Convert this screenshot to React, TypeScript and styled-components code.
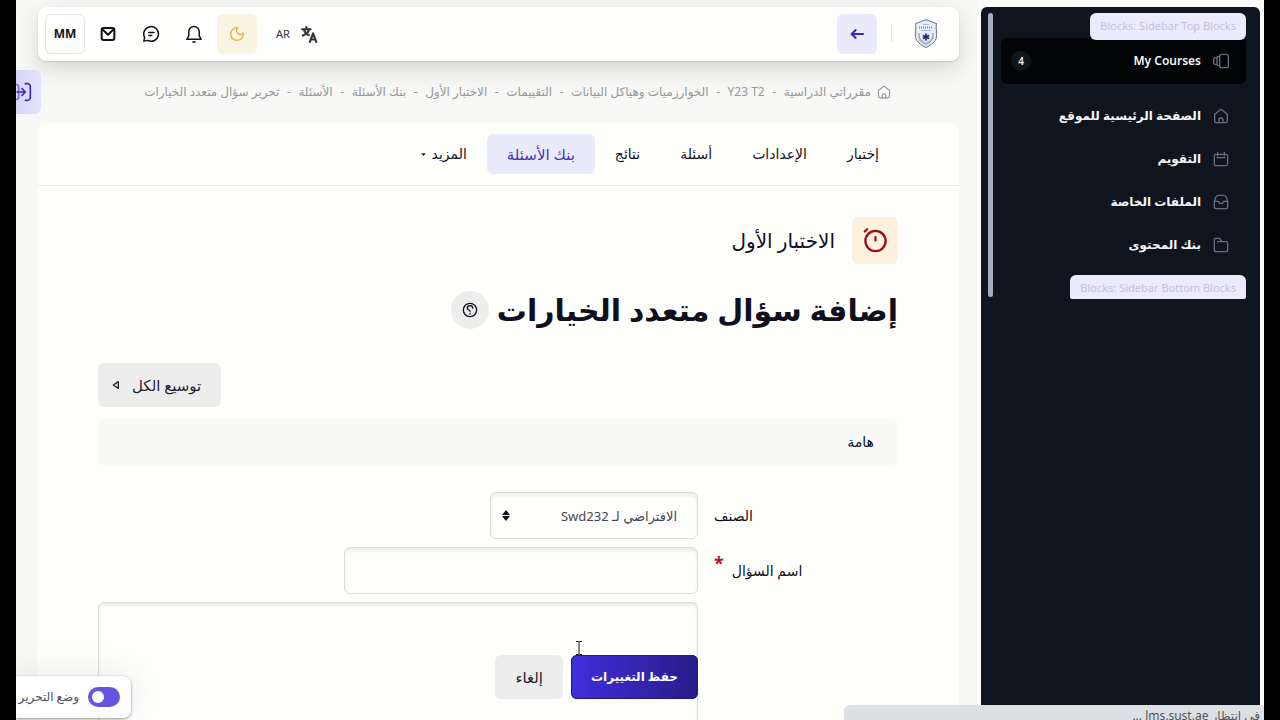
import React from "react";
import styled, { createGlobalStyle } from "styled-components";

const GlobalStyle = createGlobalStyle`
  *, *::before, *::after { box-sizing: border-box; }
  html, body { margin: 0; background: #000; }
  body {
    font-family: "Noto Sans", "DejaVu Sans", sans-serif;
    font-size: 14px;
    line-height: 20px;
    color: #0f0f1e;
  }
  button, input, select, textarea { font: inherit; color: inherit; margin: 0; }
  button { cursor: pointer; border: 0; background: none; padding: 0; }
  a { color: inherit; text-decoration: none; }
  h1, h2, p, ul, ol { margin: 0; padding: 0; }
  ul, ol { list-style: none; }
`;

const Page = styled.div`
  position: relative;
  display: flex;
  height: 100vh;
  margin: 0 16px;
  overflow: hidden;
  background: #f8f8f6;
`;

const Sidebar = styled.aside`
  flex: none;
  display: flex;
  width: 287px;
  padding: 7px 4px 14px;
  background: #fbfcfa;
`;

const SidebarPanel = styled.div`
  flex: 1;
  padding: 6px 14px 0 20px;
  background: #0f151e;
  border-radius: 6px 6px 0 0;
  position: relative;
`;

const ScrollThumb = styled.div`
  position: absolute;
  top: 6px;
  left: 7px;
  width: 5px;
  height: 284px;
  border-radius: 3px;
  background: #a9acb9;
`;

const BlockTag = styled.div<{ $bottom?: boolean }>`
  position: relative;
  z-index: 1;
  width: fit-content;
  height: ${(p) => (p.$bottom ? 24 : 27)}px;
  padding: 0 10px;
  border-radius: ${(p) => (p.$bottom ? "6px 6px 2px 2px" : "6px")};
  background: #ebebfb;
  color: #c5bfe8;
  font-size: 11px;
  line-height: 26px;
  direction: ltr;
`;

const Nav = styled.nav`
  margin: -2px 0 9px;
`;

const NavLink = styled.a<{ $active?: boolean }>`
  display: flex;
  align-items: center;
  gap: 12px;
  height: ${(p) => (p.$active ? 46 : 43)}px;
  margin-bottom: ${(p) => (p.$active ? 10 : 0)}px;
  padding: 0 17px 0 10px;
  border-radius: 6px;
  background: ${(p) => (p.$active ? "#030406" : "transparent")};
  color: #f4f6f4;
  font-weight: 600;
  font-size: 12px;

  svg { color: #696b80; flex: none; }
`;

const Count = styled.span`
  margin-right: auto;
  width: 20px;
  height: 20px;
  border-radius: 50%;
  background: #10151d;
  font-size: 10px;
  text-align: center;
`;

const Main = styled.main`
  flex: 1;
  min-width: 0;
  display: flex;
  flex-direction: column;
  padding: 7px 18px 0 22px;
`;

const TopBar = styled.header`
  flex: none;
  display: flex;
  align-items: center;
  justify-content: space-between;
  height: 54px;
  padding: 0 21px 0 7px;
  border-radius: 8px;
  background: #fefefc;
  box-shadow: 0 1px 2px rgba(0, 0, 0, 0.14), 0 8px 24px rgba(0, 0, 0, 0.14);
`;

const BarGroup = styled.div`
  display: flex;
  align-items: center;
  gap: 3px;
`;

const Divider = styled.span`
  width: 1px;
  height: 16px;
  margin: 0 19px 0 11px;
  background: #e3e4e3;
`;

const IconButton = styled.button<{ $tone?: "violet" | "amber" | "outline" }>`
  display: flex;
  align-items: center;
  justify-content: center;
  width: 40px;
  height: 40px;
  border-radius: 6px;
  font-size: 12px;
  font-weight: 700;
  border: ${(p) => (p.$tone === "outline" ? "1px solid #e4e5e6" : "0")};
  background: ${(p) => (p.$tone === "violet" ? "#eaeafb" : p.$tone === "amber" ? "#fdf3e3" : "transparent")};
  color: ${(p) => (p.$tone === "violet" ? "#3f20c2" : p.$tone === "amber" ? "#e3ae38" : "#101018")};
`;

const LanguageButton = styled.button`
  display: flex;
  align-items: center;
  gap: 11px;
  margin-left: 16px;
  font-size: 11px;
  color: #33343c;
`;

const Crumbs = styled.ol`
  display: flex;
  align-items: center;
  flex: none;
  height: 62px;
  padding: 0 68px 0 0;
  font-size: 12px;
  color: #95969c;
  white-space: nowrap;

  li { display: flex; align-items: center; }
  li + li::before { content: "-"; width: 19px; text-align: center; }
  a { display: flex; align-items: center; gap: 6px; }
`;

const Card = styled.section`
  flex: 1;
  min-height: 0;
  border-radius: 6px 6px 0 0;
  background: #fefefb;
`;

const Tabs = styled.nav`
  display: flex;
  height: 63px;
  padding: 11px 60px;
  border-bottom: 1px solid #ecedeb;
`;

const Tab = styled.a<{ $active?: boolean }>`
  display: flex;
  align-items: center;
  gap: 6px;
  height: 40px;
  padding: 0 20px;
  border-radius: 6px;
  background: ${(p) => (p.$active ? "#e9eafa" : "transparent")};
  color: ${(p) => (p.$active ? "#4a35ae" : "#14141f")};
  font-size: ${(p) => (p.$active ? 15 : 14)}px;
  white-space: nowrap;
`;

const Content = styled.div`
  display: flex;
  flex-direction: column;
  padding: 31px 61px 0 60px;
`;

const Activity = styled.div`
  display: flex;
  align-items: center;
  gap: 17px;
  font-size: 20px;
  line-height: 28px;
`;

const ActivityIcon = styled.span`
  display: flex;
  align-items: center;
  justify-content: center;
  width: 46px;
  height: 47px;
  border-radius: 6px;
  background: #fcf0df;
  color: #a00912;
`;

const Heading = styled.div`
  display: flex;
  align-items: center;
  gap: 8px;
  height: 40px;
  margin: 26px 0 33px;

  h1 { font-size: 30px; line-height: 40px; font-weight: 700; white-space: nowrap; }
`;

const HelpButton = styled.button`
  display: flex;
  align-items: center;
  justify-content: center;
  width: 38px;
  height: 38px;
  border-radius: 50%;
  background: #ededed;
`;

const Button = styled.button<{ $primary?: boolean; $withIcon?: boolean }>`
  display: flex;
  align-items: center;
  justify-content: center;
  gap: 12px;
  height: 44px;
  padding: ${(p) => (p.$withIcon ? "0 20px 0 14px" : "0 20px")};
  border-radius: 6px;
  background: ${(p) => (p.$primary ? "linear-gradient(90deg, #3f2fdd, #281c88)" : "#ededed")};
  box-shadow: ${(p) => (p.$primary ? "inset 0 0 0 1px #241878" : "none")};
  color: ${(p) => (p.$primary ? "#fff" : "#23232e")};
  font-size: ${(p) => (p.$primary ? 12 : 15)}px;
  font-weight: ${(p) => (p.$primary ? 700 : 400)};
  white-space: nowrap;
`;

const ExpandRow = styled.div`
  display: flex;
  justify-content: flex-end;
  margin-bottom: 12px;
`;

const SectionTitle = styled.h2`
  height: 46px;
  margin-bottom: 27px;
  padding: 0 24px;
  border-radius: 6px;
  background: #f9f9f7;
  font-size: 14px;
  font-weight: 500;
  line-height: 46px;
`;

const FormRow = styled.div`
  display: grid;
  grid-template-columns: 1fr 3fr;
  margin-bottom: 8px;
`;

const Label = styled.label`
  display: flex;
  align-items: center;
  justify-content: flex-end;
  gap: 8px;
  padding-left: 16px;
`;

const Required = styled.span`
  height: 36px;
  color: #b8132f;
  font-size: 18px;
  font-weight: 700;
`;

const fieldBox = `
  border: 1px solid #dcdddb;
  border-radius: 6px;
  background: #fefefc;
  box-shadow: inset 0 3px 3px rgba(0, 0, 0, 0.07);
  outline: 0;
`;

const SelectWrap = styled.div`
  position: relative;
  width: 208px;
`;

const Select = styled.select`
  ${fieldBox}
  appearance: none;
  display: block;
  width: 100%;
  height: 47px;
  padding: 0 20px;
  color: #454653;
  font-size: 13px;
`;

const SelectArrows = styled.svg`
  position: absolute;
  left: 12px;
  top: 18px;
  pointer-events: none;
`;

const TextInput = styled.input`
  ${fieldBox}
  width: 354px;
  height: 47px;
  padding: 0 20px;
`;

const EditorWrap = styled.div`
  position: relative;
`;

const Editor = styled.textarea`
  ${fieldBox}
  display: block;
  width: 100%;
  height: 200px;
  padding: 20px;
  resize: none;
`;

const Actions = styled.div`
  position: absolute;
  top: 53px;
  right: 0;
  display: flex;
  gap: 8px;
`;

const Pointer = styled.svg`
  position: absolute;
  top: 39px;
  right: 115px;
`;

const DrawerToggle = styled.button`
  position: absolute;
  top: 70px;
  left: 0;
  display: flex;
  align-items: center;
  width: 25px;
  height: 44px;
  border-radius: 0 6px 6px 0;
  background: linear-gradient(90deg, #d7d5f7, #e3e2fb);
  color: #4425b5;
  direction: ltr;
  overflow: hidden;

  svg { flex: none; margin-left: -4px; }
`;

const EditMode = styled.label`
  position: absolute;
  left: 0;
  bottom: 2px;
  display: flex;
  align-items: center;
  gap: 9px;
  width: 115px;
  height: 42px;
  padding-right: 11px;
  border-radius: 0 8px 8px 0;
  background: #fefefe;
  box-shadow: 0 1px 3px rgba(0, 0, 0, 0.4), 0 -4px 32px rgba(0, 0, 0, 0.08);
  color: #50515b;
  font-size: 12px;
  white-space: nowrap;
`;

const Switch = styled.input`
  appearance: none;
  flex: none;
  display: flex;
  align-items: center;
  justify-content: flex-end;
  width: 32px;
  height: 20px;
  padding: 0 4px;
  border-radius: 10px;
  background: #6656df;

  &::before {
    content: "";
    width: 12px;
    height: 12px;
    border-radius: 50%;
    background: #fff;
  }
`;

const StatusBar = styled.div`
  position: absolute;
  right: 0;
  bottom: 0;
  width: 420px;
  height: 15px;
  padding: 1px 4px 0;
  overflow: hidden;
  border-radius: 6px 0 0 0;
  background: #dde0e3;
  color: #53565b;
  font-size: 12px;
  white-space: nowrap;
`;

type IconName =
  | "courses" | "home" | "calendar" | "files" | "folder" | "mail" | "chat"
  | "bell" | "moon" | "translate" | "back" | "drawer" | "timer" | "help" | "caret" | "expand";

const shapes: Record<IconName, React.ReactNode> = {
  courses: <><rect x="10" y="2" width="13" height="20" rx="3" /><path d="M10 5H8a2 2 0 0 0-2 2v10a2 2 0 0 0 2 2h2M5 7H3a2 2 0 0 0-2 2v6a2 2 0 0 0 2 2h2" /></>,
  home: <><path d="M2.500 9.500 12 2l9.500 7.500V19a3 3 0 0 1-3 3h-13a3 3 0 0 1-3-3z" /><path d="M9 22v-4a3 3 0 0 1 6 0v4" /></>,
  calendar: <><rect x="2" y="5" width="20" height="17" rx="2" /><path d="M7 2v5M17 2v5M6 10h12" /></>,
  files: <><path d="M2 11l2-6a4 4 0 0 1 4-3h8a4 4 0 0 1 4 3l2 6v8a3 3 0 0 1-3 3H5a3 3 0 0 1-3-3z" /><path d="M2 11h6l2 3h4l2-3h6" /></>,
  folder: <path d="M2 19V4a2 2 0 0 1 2-2h6l3 5h7a2 2 0 0 1 2 2v10a3 3 0 0 1-3 3H5a3 3 0 0 1-3-3zM7 7h6" />,
  mail: <><rect x="2.500" y="3" width="19" height="18" rx="3" /><path d="m3.500 5 8.500 8 8.500-8" /></>,
  chat: <><path d="M2.500 21.500l1-5a9.800 9.800 0 1 1 4 4z" /><path d="M9 10h7M9 14h4" /></>,
  bell: <><path d="M2.500 19h19l-2.500-4.500V9A7 7 0 0 0 5 9v5.500z" /><path d="M10.500 22.500h3" /></>,
  moon: <path d="M13 2.500a5.800 5.800 0 0 0 8.500 8.500A9.500 9.500 0 1 1 13 2.500z" />,
  translate: <><path d="M1.500 4.500h12M7.500 1.500v3M4 4.500c1 4 4 7 7 8.500M11.500 4.500c-1 4-5 7.500-9 9" /><path d="m12.500 22.500 4.500-12 4.500 12M14 19h6" /></>,
  back: <path d="M21 12H4M10 6l-6 6 6 6" />,
  drawer: <><path d="M1 3h4a3 3 0 0 1 3 3v12a3 3 0 0 1-3 3H1" opacity=".6" /><path d="M6 12h10M12 8l4 4-4 4M16 2h2.500a3.500 3.500 0 0 1 3.500 3.500v13a3.500 3.500 0 0 1-3.500 3.500H16" /></>,
  timer: <><circle cx="12" cy="12.500" r="9" /><path d="M12 9v3M2.500 4l2-2" /></>,
  help: <><circle cx="12" cy="12" r="10" /><path d="M16 9.500a4 4 0 0 0-8 0c0 3 4 2 4 4.500M12 17v1" strokeWidth="2" /></>,
  caret: <path d="M1 6h22L12 19z" fill="currentColor" stroke="none" />,
  expand: <path d="M19 2v20L4 12z" />,
};

const Icon = ({ name, size = 16, weight = 2 }: { name: IconName; size?: number; weight?: number }) => (
  <svg width={size} height={size} viewBox="0 0 24 24" fill="none" stroke="currentColor" strokeWidth={weight} strokeLinecap="round" strokeLinejoin="round" aria-hidden="true">
    {shapes[name]}
  </svg>
);

const Crest = () => (
  <svg width="24" height="30" viewBox="0 0 24 30" fill="none" role="img" aria-label="SUST">
    <path d="M12 1C15 1 17 3 22.500 4.500c-1 4 .5 9 0 13C22 23 17.500 25.500 12 28.500 6.500 25.500 2 23 1.500 17.500c-.5-4 1-9 0-13C7 3 9 1 12 1z" fill="#e6edf8" stroke="#60708f" />
    <path d="M5 8.500h14" stroke="#8190b4" strokeWidth="2" strokeDasharray="1 1" />
    <path d="M9 5.500h6M7 11.500h10" stroke="#b3bfd8" />
    <path d="M5 14c-1 6 2 9 7 11 5-2 8-5 7-11" stroke="#a9a9ae" strokeWidth="1.500" />
    <circle cx="12" cy="18" r="4" fill="#cfd1ef" />
    <path d="M12 14.500v7M9 16.500l6 3M15 16.500l-6 3" stroke="#25206f" strokeWidth="1.500" />
  </svg>
);

const navItems: { icon: IconName; label: string }[] = [
  { icon: "home", label: "الصفحة الرئيسية للموقع" },
  { icon: "calendar", label: "التقويم" },
  { icon: "files", label: "الملفات الخاصة" },
  { icon: "folder", label: "بنك المحتوى" },
];

const crumbs = [
  "مقرراتي الدراسية", "Y23 T2", "الخوارزميات وهياكل البيانات", "التقييمات",
  "الاختبار الأول", "بنك الأسئلة", "الأسئلة", "تحرير سؤال متعدد الخيارات",
];

const tabs = ["إختبار", "الإعدادات", "أسئلة", "نتائج", "بنك الأسئلة", "المزيد"];

export default function App() {
  return (
    <>
      <GlobalStyle />
      <Page dir="rtl" lang="ar">
        <Sidebar>
          <SidebarPanel>
            <ScrollThumb />
            <BlockTag>Blocks: Sidebar Top Blocks</BlockTag>
            <Nav>
              <NavLink href="#" $active>
                <Icon name="courses" />
                My Courses
                <Count>4</Count>
              </NavLink>
              {navItems.map((item) => (
                <NavLink href="#" key={item.label}>
                  <Icon name={item.icon} />
                  {item.label}
                </NavLink>
              ))}
            </Nav>
            <BlockTag $bottom>Blocks: Sidebar Bottom Blocks</BlockTag>
          </SidebarPanel>
        </Sidebar>

        <Main>
          <TopBar>
            <BarGroup>
              <Crest />
              <Divider />
              <IconButton $tone="violet" aria-label="رجوع"><Icon name="back" weight={3} /></IconButton>
            </BarGroup>
            <BarGroup>
              <LanguageButton>
                <Icon name="translate" size={17} weight={3} />
                AR
              </LanguageButton>
              <IconButton $tone="amber" aria-label="الوضع الليلي"><Icon name="moon" /></IconButton>
              <IconButton aria-label="الإشعارات"><Icon name="bell" size={18} /></IconButton>
              <IconButton aria-label="الرسائل"><Icon name="chat" size={18} /></IconButton>
              <IconButton aria-label="البريد"><Icon name="mail" weight={3} /></IconButton>
              <IconButton $tone="outline">MM</IconButton>
            </BarGroup>
          </TopBar>

          <Crumbs>
            {crumbs.map((crumb, i) => (
              <li key={crumb}>
                <a href="#">{i === 0 && <Icon name="home" size={14} />}{crumb}</a>
              </li>
            ))}
          </Crumbs>

          <Card>
            <Tabs>
              {tabs.map((tab) => (
                <Tab href="#" key={tab} $active={tab === "بنك الأسئلة"}>
                  {tab}
                  {tab === "المزيد" && <Icon name="caret" size={5} />}
                </Tab>
              ))}
            </Tabs>
            <Content>
              <Activity>
                <ActivityIcon><Icon name="timer" size={27} /></ActivityIcon>
                الاختبار الأول
              </Activity>
              <Heading>
                <h1>إضافة سؤال متعدد الخيارات</h1>
                <HelpButton aria-label="مساعدة"><Icon name="help" /></HelpButton>
              </Heading>
              <ExpandRow>
                <Button type="button" $withIcon>توسيع الكل<Icon name="expand" size={8} weight={4} /></Button>
              </ExpandRow>
              <SectionTitle>هامة</SectionTitle>
              <FormRow>
                <Label htmlFor="category">الصنف</Label>
                <SelectWrap>
                  <Select id="category"><option>الافتراضي لـ Swd232</option></Select>
                  <SelectArrows width="8" height="11" viewBox="0 0 8 11" aria-hidden="true">
                    <path d="M4 0l4 5H0zM4 11L0 6h8z" fill="#11111c" />
                  </SelectArrows>
                </SelectWrap>
              </FormRow>
              <FormRow>
                <Label htmlFor="question-name">اسم السؤال<Required>*</Required></Label>
                <TextInput id="question-name" />
              </FormRow>
              <FormRow>
                <span />
                <EditorWrap>
                  <Editor aria-label="نص السؤال" />
                  <Actions>
                    <Button type="submit" $primary>حفظ التغييرات</Button>
                    <Button type="button">إلغاء</Button>
                  </Actions>
                  <Pointer width="8" height="14" viewBox="0 0 8 14" fill="none" stroke="#111" aria-hidden="true">
                    <path d="M1 .5h2.500l.5.500.5-.5H7M4 1v12M1 13.500h2.500L4 13l.5.500H7" />
                  </Pointer>
                </EditorWrap>
              </FormRow>
            </Content>
          </Card>
        </Main>

        <DrawerToggle aria-label="فتح درج الكتل"><Icon name="drawer" size={20} /></DrawerToggle>
        <EditMode>
          <Switch type="checkbox" role="switch" defaultChecked />
          وضع التحرير
        </EditMode>
        <StatusBar>في انتظار lms.sust.ae ...</StatusBar>
      </Page>
    </>
  );
}
